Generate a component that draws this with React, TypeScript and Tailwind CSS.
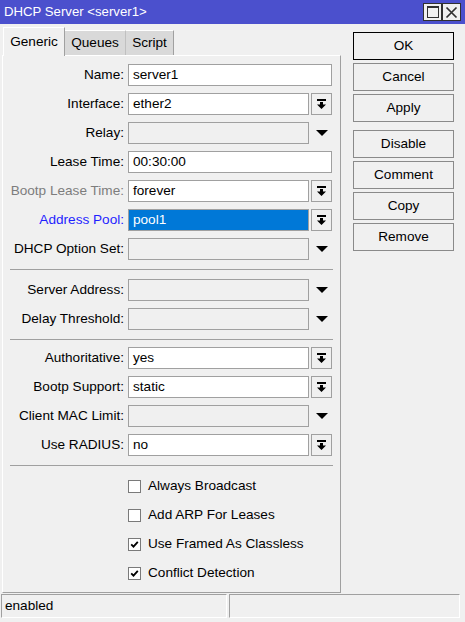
import React from 'react';

type Kind = 'text' | 'select' | 'none';

interface FieldProps {
  label: string;
  value?: string;
  kind: Kind;
  tone?: 'normal' | 'gray' | 'blue';
  selected?: boolean;
  className?: string;
}

const DropIcon = () => (
  <svg width="9" height="10" viewBox="0 0 9 10" className="fill-black">
    <rect x="0" y="0" width="9" height="2" />
    <path d="M3 3h3v2.5h3L4.5 10 0 5.5h3z" />
  </svg>
);

const Triangle = () => (
  <svg width="12" height="6" viewBox="0 0 12 6" className="fill-black">
    <path d="M0 0h12L6 6z" />
  </svg>
);

function Field({ label, value, kind, tone = 'normal', selected, className = '' }: FieldProps) {
  const toneClass =
    tone === 'gray' ? 'text-[#7d7d7d]' : tone === 'blue' ? 'text-[#1f1fff]' : 'text-black';

  return (
    <div className={`flex h-[22px] items-center ${className}`}>
      <div className={`w-[121px] whitespace-nowrap text-right ${toneClass}`}>{label}</div>
      {kind === 'text' && (
        <div className="ml-[4px] flex h-[22px] w-[204px] items-center border border-[#a0a0a0] bg-white pl-[4px]">
          {value}
        </div>
      )}
      {kind === 'select' && (
        <>
          <div
            className={`ml-[4px] flex h-[22px] w-[181px] items-center border border-[#a0a0a0] pl-[4px] ${
              selected ? 'bg-[#0078d7] text-white' : 'bg-white'
            }`}
          >
            {value}
          </div>
          <div className="ml-[2px] flex h-[22px] w-[21px] items-center justify-center border border-[#a0a0a0] bg-[#f0f0f0]">
            <DropIcon />
          </div>
        </>
      )}
      {kind === 'none' && (
        <>
          <div className="ml-[4px] h-[22px] w-[181px] border border-[#a0a0a0] bg-[#f0f0f0]" />
          <div className="ml-[2px] flex h-[22px] w-[21px] items-center justify-center">
            <Triangle />
          </div>
        </>
      )}
    </div>
  );
}

function Check({ label, checked, className = '' }: { label: string; checked: boolean; className?: string }) {
  return (
    <div className={`flex h-[22px] items-center pl-[125px] ${className}`}>
      <div className="flex h-[13px] w-[13px] items-center justify-center border border-[#7a7a7a] bg-white">
        {checked && (
          <svg width="9" height="9" viewBox="0 0 9 9">
            <path d="M1.2 4.3l2.3 2.4L7.8 1.8" fill="none" stroke="black" strokeWidth="1.8" />
          </svg>
        )}
      </div>
      <span className="ml-[7px] whitespace-nowrap">{label}</span>
    </div>
  );
}

const Separator = ({ className = '' }: { className?: string }) => (
  <div className={`ml-[7px] h-px w-[323px] bg-[#a0a0a0] ${className}`} />
);

function SideButton({ label, primary, className = '' }: { label: string; primary?: boolean; className?: string }) {
  return (
    <div
      className={`flex h-[28px] w-[101px] items-center justify-center border bg-[#f0f0f0] pt-[1px] ${
        primary ? 'border-black' : 'border-[#8a8a8a]'
      } ${className}`}
    >
      {label}
    </div>
  );
}

export default function App() {
  return (
    <div className="flex h-[622px] w-[465px] flex-col overflow-hidden bg-[#f0f0f0] font-['Liberation_Sans',Arial,sans-serif] text-[13.6px] text-black">
      {/* Title bar */}
      <div className="flex h-[24px] shrink-0 items-center bg-[#4b50cd] pl-[4px] text-[13.2px] text-white">
        <span className="whitespace-nowrap">DHCP Server &lt;server1&gt;</span>
        <div className="ml-auto mr-[4px] flex">
          <div className="flex h-[18px] w-[19px] items-center justify-center border border-[#303030] bg-[#f0f0f0]">
            <div className="h-[12px] w-[12px] border border-t-2 border-[#303030]" />
          </div>
          <div className="flex h-[18px] w-[19px] items-center justify-center border border-[#303030] bg-[#f0f0f0]">
            <svg width="13" height="13" viewBox="0 0 13 13">
              <path d="M1.5 1.5l10 10M11.5 1.5l-10 10" stroke="#303030" strokeWidth="1.7" />
            </svg>
          </div>
        </div>
      </div>

      <div className="flex">
        {/* Left: tabs + panel */}
        <div className="pl-[2px] pt-[3px]">
          <div className="flex h-[28px] items-end pl-[1px]">
            <div className="relative z-10 -mb-px flex h-[29px] w-[62px] items-center justify-center border-l border-t border-r border-l-white border-t-white border-r-[#a0a0a0] bg-[#f0f0f0]">
              Generic
            </div>
            <div className="flex h-[25px] w-[61px] items-center justify-center border-t border-r border-[#c0c0c0] border-t-white bg-[#d9d9d9]">
              Queues
            </div>
            <div className="flex h-[25px] w-[48px] items-center justify-center border-t border-r border-[#a0a0a0] border-t-white bg-[#d9d9d9]">
              Script
            </div>
          </div>
          <div className="h-[538px] w-[339px] border border-b-[#a0a0a0] border-l-white border-r-[#a0a0a0] border-t-white pt-[8px]">
            <Field label="Name:" kind="text" value="server1" />
            <Field className="mt-[7px]" label="Interface:" kind="select" value="ether2" />
            <Field className="mt-[7px]" label="Relay:" kind="none" />
            <Field className="mt-[7px]" label="Lease Time:" kind="text" value="00:30:00" />
            <Field className="mt-[7px]" label="Bootp Lease Time:" kind="select" value="forever" tone="gray" />
            <Field className="mt-[7px]" label="Address Pool:" kind="select" value="pool1" tone="blue" selected />
            <Field className="mt-[7px]" label="DHCP Option Set:" kind="none" />

            <Separator className="mt-[9px]" />

            <Field className="mt-[9px]" label="Server Address:" kind="none" />
            <Field className="mt-[7px]" label="Delay Threshold:" kind="none" />

            <Separator className="mt-[9px]" />

            <Field className="mt-[7px]" label="Authoritative:" kind="select" value="yes" />
            <Field className="mt-[7px]" label="Bootp Support:" kind="select" value="static" />
            <Field className="mt-[7px]" label="Client MAC Limit:" kind="none" />
            <Field className="mt-[7px]" label="Use RADIUS:" kind="select" value="no" />

            <Separator className="mt-[9px]" />

            <Check className="mt-[9px]" label="Always Broadcast" checked={false} />
            <Check className="mt-[7px]" label="Add ARP For Leases" checked={false} />
            <Check className="mt-[7px]" label="Use Framed As Classless" checked />
            <Check className="mt-[7px]" label="Conflict Detection" checked />
          </div>
        </div>

        {/* Right: action buttons */}
        <div className="ml-[12px] mt-[8px] flex flex-col">
          <SideButton label="OK" primary />
          <SideButton className="mt-[3px]" label="Cancel" />
          <SideButton className="mt-[3px]" label="Apply" />
          <SideButton className="mt-[8px]" label="Disable" />
          <SideButton className="mt-[3px]" label="Comment" />
          <SideButton className="mt-[3px]" label="Copy" />
          <SideButton className="mt-[3px]" label="Remove" />
        </div>
      </div>

      {/* Status bar */}
      <div className="mt-[1px] flex gap-[2px] pl-[1px]">
        <div className="flex h-[24px] w-[226px] items-center border border-b-white border-l-[#a0a0a0] border-r-white border-t-[#a0a0a0] pl-[3px]">
          enabled
        </div>
        <div className="h-[24px] w-[231px] border border-b-white border-l-[#a0a0a0] border-r-white border-t-[#a0a0a0]" />
      </div>
    </div>
  );
}
